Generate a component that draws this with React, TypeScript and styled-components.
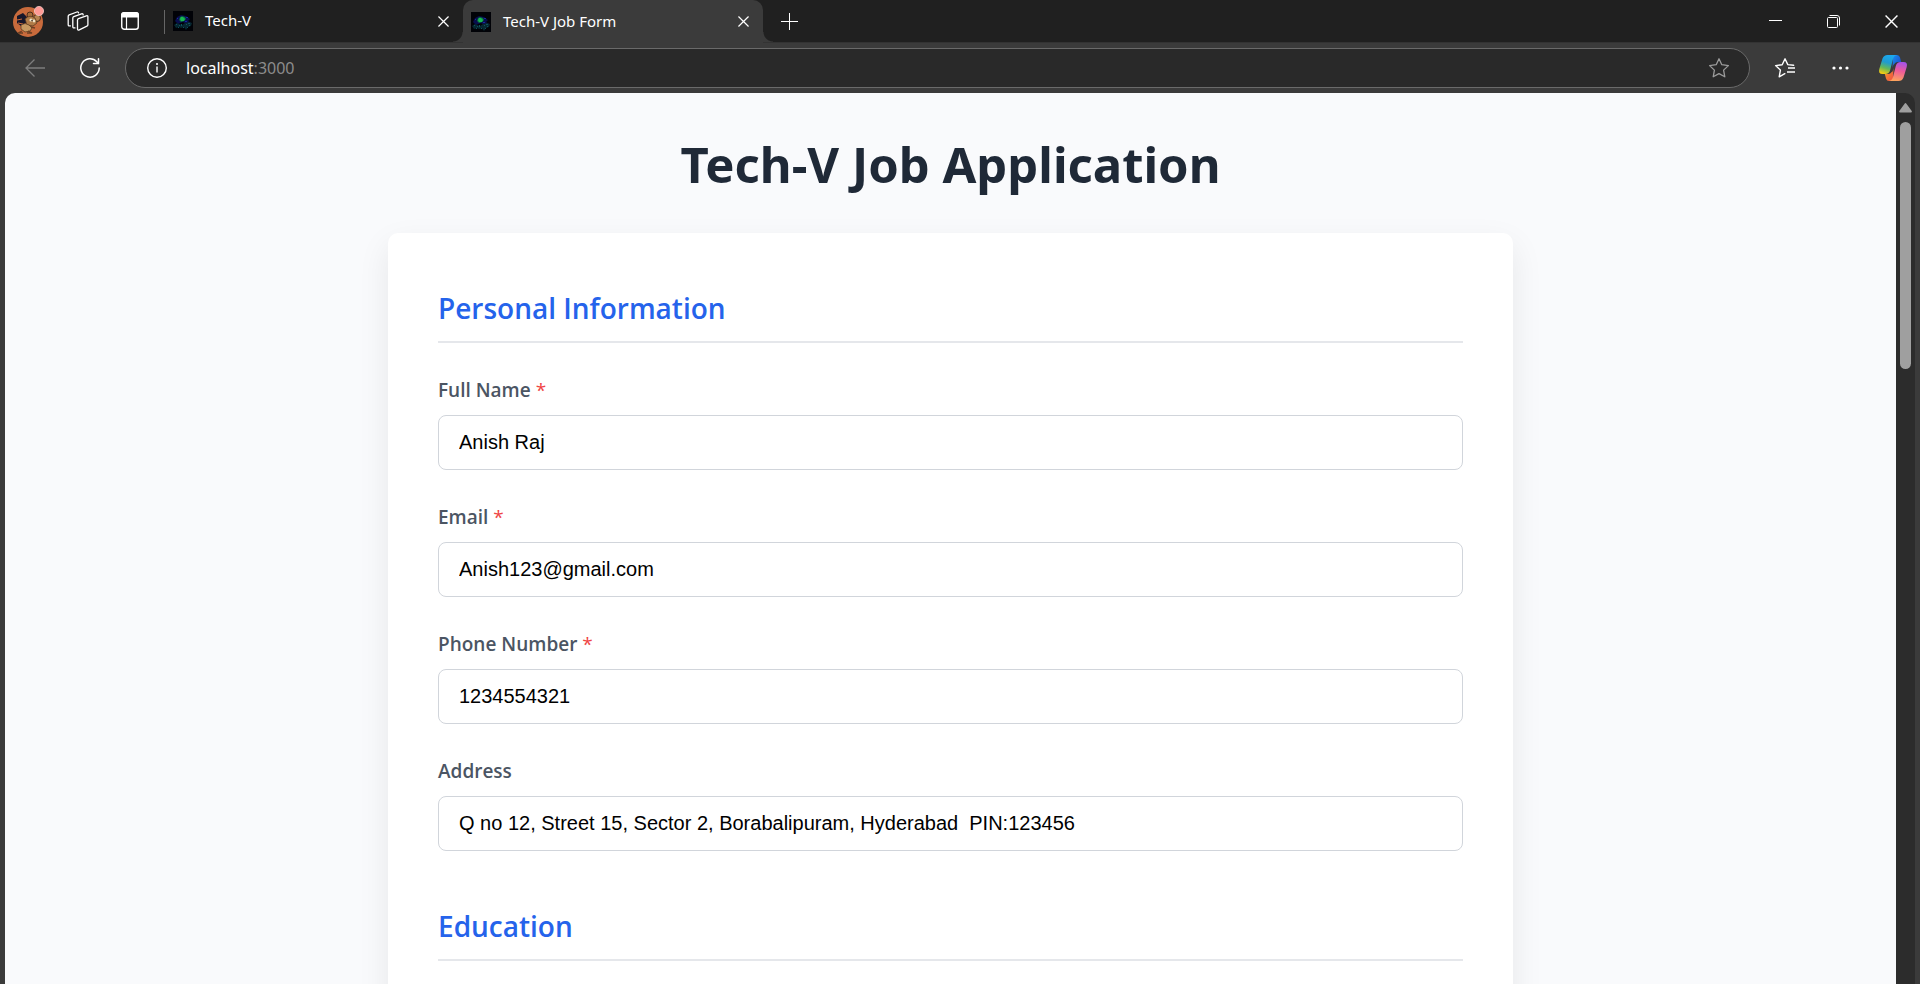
import React, { useId } from 'react';
import styled, { createGlobalStyle, css } from 'styled-components';

const GlobalStyle = createGlobalStyle`
  *, *::before, *::after { box-sizing: border-box; }
  body { margin: 0; background: #3b3b3b; font-family: "Noto Sans", "Open Sans", sans-serif; }
`;

const Browser = styled.div`
  display: flex;
  flex-direction: column;
  height: 100vh;
  overflow: hidden;
  background: #3b3b3b;
  color: #ffffff;
`;

const TabStrip = styled.header`
  display: flex;
  align-items: stretch;
  height: 43px;
  flex: none;
  background: #202020;
  border-bottom: 1px solid #333333;
`;

const IconButton = styled.button<{ $width?: number }>`
  display: flex;
  align-items: center;
  justify-content: center;
  flex: none;
  width: ${({ $width = 40 }) => $width}px;
  padding: 0;
  border: 0;
  background: none;
  color: #ffffff;

  &:disabled { color: #7d7d7d; }
  svg { display: block; overflow: visible; }
`;

const StripTools = styled.div`
  display: flex;
  padding: 0 4px 0 3px;
`;

const TabList = styled.nav`
  display: flex;
`;

const Tab = styled.div<{ $active?: boolean }>`
  position: relative;
  display: flex;
  align-items: center;
  width: 300px;
  padding: 0 4px 0 ${({ $active }) => ($active ? 8 : 10)}px;

  ${({ $active }) => $active ? css`
    height: 43px;
    background: #3b3b3b;
    border-radius: 10px 10px 0 0;

    &::before, &::after {
      content: "";
      position: absolute;
      bottom: 1px;
      width: 10px;
      height: 10px;
    }
    &::before { left: -10px; background: radial-gradient(circle at 0 0, transparent 9px, #3b3b3b 10px); }
    &::after { right: -10px; background: radial-gradient(circle at 100% 0, transparent 9px, #3b3b3b 10px); }
  ` : css`
    &::before {
      content: "";
      position: absolute;
      left: 1px;
      top: 10px;
      width: 1px;
      height: 24px;
      background: #666666;
    }
  `}
`;

const TabLink = styled.a`
  display: flex;
  align-items: center;
  gap: 12px;
  flex: 1;
  color: #ffffff;
  font-size: 15px;
  line-height: 20px;
  text-decoration: none;
  white-space: nowrap;
`;

const TabTitle = styled.span`
  padding-bottom: 2px;
`;

const WindowControls = styled.div`
  display: flex;
  margin-left: auto;
`;

const Toolbar = styled.div`
  display: flex;
  align-items: center;
  height: 50px;
  flex: none;
  padding: 0 2px 0 7px;
`;

const AddressBar = styled.div`
  display: flex;
  align-items: center;
  flex: 1;
  height: 40px;
  margin: 0 8px;
  padding: 0 10px 0 11px;
  border: 1px solid #6a6a6a;
  border-radius: 20px;
  background: #292929;
`;

const Address = styled.a`
  flex: 1;
  margin-left: 9px;
  color: #ffffff;
  font-size: 16px;
  line-height: 24px;
  text-decoration: none;

  span { color: #8c8c8c; }
`;

const Viewport = styled.div`
  display: flex;
  flex: 1;
  min-height: 0;
  margin: 0 5px;
  overflow: hidden;
  border-radius: 10px 10px 0 0;
`;

const Page = styled.main`
  flex: 1;
  min-width: 0;
  padding: 41px 20px;
  overflow: hidden;
  background: #f9fafc;
`;

const PageTitle = styled.h1`
  margin: 0 0 39px;
  color: #1f2937;
  font-size: 49px;
  font-weight: 700;
  line-height: 60px;
  text-align: center;
`;

const Card = styled.form`
  max-width: 1125px;
  margin: 0 auto;
  padding: 0 50px 50px;
  border-radius: 10px;
  background: #ffffff;
  box-shadow: 0 12px 32px rgba(0, 0, 0, 0.08);
`;

const Section = styled.section`
  display: flex;
  flex-direction: column;
  gap: 33px;
  padding-top: 55px;
`;

const SectionTitle = styled.h2`
  margin: 0;
  padding-bottom: 13px;
  border-bottom: 2px solid #e5e7eb;
  color: #2563eb;
  font-family: "Open Sans", sans-serif;
  font-size: 28px;
  font-weight: 600;
  line-height: 40px;
`;

const FieldGroup = styled.div`
  display: flex;
  flex-direction: column;
  gap: 11px;
`;

const Label = styled.label`
  color: #4b5563;
  font-family: "Open Sans", sans-serif;
  font-size: 19px;
  font-weight: 600;
  line-height: 28px;
`;

const Required = styled.span`
  color: #ef4444;
  font-weight: 400;
`;

const TextInput = styled.input`
  width: 100%;
  height: 55px;
  padding: 0 20px;
  border: 1px solid #d1d5db;
  border-radius: 8px;
  background: #ffffff;
  color: #000000;
  font-family: "Liberation Sans", Arial, sans-serif;
  font-size: 20px;
`;

const ScrollTrack = styled.div`
  display: flex;
  flex-direction: column;
  align-items: center;
  gap: 9px;
  width: 19px;
  padding-top: 10px;
  background: #2c2c2c;
`;

const ScrollThumb = styled.div`
  width: 11px;
  height: 28%;
  border-radius: 6px;
  background: #9f9f9f;
`;

const Avatar = () => (
  <svg width="32" height="32" viewBox="0 0 32 32">
    <circle cx="15" cy="17" r="15" fill="#c96b3c" />
    <path d="M4 11l6-3 4 4-1 6-5 3-4-3z" fill="#17172a" />
    <path d="M4 15l5-1M5 18l5 1" stroke="#c96b3c" />
    <circle cx="17" cy="10" r="3" fill="#a56d3c" stroke="#4c2d1a" />
    <circle cx="24" cy="13" r="3.5" fill="#b88450" stroke="#4c2d1a" />
    <path d="M12 14q5-5 10-1l2 5-4 3-6-1z" fill="#b07c48" stroke="#53351e" strokeWidth=".7" />
    <circle cx="18" cy="15" r="1.6" fill="#f1e4c8" />
    <circle cx="21" cy="16" r="1.4" fill="#f1e4c8" />
    <circle cx="19" cy="15.5" r=".7" fill="#1b130e" />
    <path d="M8 20q4-3 8 0l3 3-2 3-5 1-4-3z" fill="#c79a62" stroke="#53351e" strokeWidth=".7" />
    <path d="M9 26l-4 2h5M15 26l4 2h-5M18 22l4 1" stroke="#6b4023" strokeWidth="1.3" fill="none" />
    <circle cx="26" cy="6" r="4.6" fill="#ff9a95" stroke="#f3c9c4" strokeWidth=".8" />
  </svg>
);

const WorkspacesIcon = () => (
  <svg width="22" height="20" viewBox="0 0 22 20" fill="none" stroke="currentColor" strokeWidth="1.3" strokeLinejoin="round" strokeLinecap="round">
    <path d="M10.500 9q0-1 1-1.400l7.800-2.800q1.600-.5 1.600 1v8q0 1-1 1.400l-7.600 3.600q-1.800.8-1.800-1z" />
    <path d="M8 16.800q-2.200.6-2.200-1V7q0-1 1-1.400L14.500 2.800q1.400-.4 1.700 1" />
    <path d="M3.400 14.800Q1.200 15.400 1.200 13.800V5.200q0-1 1-1.400L9.900 1q1.400-.4 1.700.8" />
  </svg>
);

const TabActionsIcon = () => (
  <svg width="18" height="18" viewBox="0 0 18 18">
    <rect x=".75" y=".75" width="16.500" height="16.500" rx="2.500" fill="none" stroke="currentColor" strokeWidth="1.400" />
    <path d="M0 5.500V3a3 3 0 0 1 3-3h12a3 3 0 0 1 3 3v2.500z" fill="currentColor" />
    <path d="M5.500 5v12" stroke="currentColor" strokeWidth="1.200" />
  </svg>
);

const Favicon = () => (
  <svg width="20" height="20" viewBox="0 0 20 20">
    <rect width="20" height="20" fill="#010207" />
    <path d="M2 10l2-4 4-2 5 1 4 3-2 2 3 2-5 1-3-2-5 2z" fill="#080e4c" />
    <path d="M1 14l3-2 2 1 3 1 3-2 4-1 3 1-1 3-3 1-2 3-2-3-3 1-2-1-3 1z" fill="#062731" />
    <path d="M3 13h1v1H3zM6 14h1v1H6zM8 13h1v2H8zM13 13h1v1h-1zM15 12h2v1h-2zM14 16h1v1h-1zM10 16h1v1h-1zM5 16h1v1H5zM16 14h1v1h-1z" fill="#0e535c" />
    <path d="M6 9l1-3 2-1 3 1 1 2-2 2-3 1z" fill="#0a6c45" />
    <path d="M7 8l1-2h2l2 2-1 2H8z" fill="#18b950" />
    <path d="M4 7h1v1H4zM13 6h2v1h-2zM12 10h2v1h-2z" fill="#1729a1" />
  </svg>
);

const CrossIcon = ({ size = 11 }: { size?: number }) => (
  <svg width={size} height={size} viewBox="0 0 12 12" stroke="currentColor" strokeWidth="1.300">
    <path d="M.5.500l11 11M11.500.500l-11 11" />
  </svg>
);

const PlusIcon = () => (
  <svg width="17" height="17" viewBox="0 0 17 17" stroke="currentColor">
    <path d="M8.500 0v17M0 8.500h17" />
  </svg>
);

const MinimizeIcon = () => (
  <svg width="13" height="13" viewBox="0 0 13 13" stroke="currentColor"><path d="M0 5.500h13" /></svg>
);

const RestoreIcon = () => (
  <svg width="13" height="13" viewBox="0 0 13 13" fill="none" stroke="currentColor">
    <rect x=".5" y="2.500" width="10" height="10" rx="1" />
    <path d="M2.500 .500h7.500a2.500 2.500 0 0 1 2.500 2.500v7.500" />
  </svg>
);

const BackIcon = () => (
  <svg width="20" height="18" viewBox="0 0 20 18" fill="none" stroke="currentColor" strokeWidth="1.300">
    <path d="M20 9H1M9.500 .500L1 9l8.500 8.500" />
  </svg>
);

const ReloadIcon = () => (
  <svg width="20" height="20" viewBox="0 0 20 20" fill="none" stroke="currentColor" strokeWidth="1.500" strokeLinecap="round">
    <path d="M19.200 10A9.200 9.200 0 1 1 16.800 3.800L18.500 5.500M18.500 .800v4.700H13.500" />
  </svg>
);

const InfoIcon = () => (
  <svg width="20" height="20" viewBox="0 0 20 20" fill="none" stroke="currentColor" strokeWidth="1.400">
    <circle cx="10" cy="10" r="9.300" />
    <path d="M10 8.500v6" />
    <circle cx="10" cy="6" r="1" fill="currentColor" stroke="none" />
  </svg>
);

const StarIcon = () => (
  <svg width="20" height="20" viewBox="0 0 20 20" fill="none" stroke="#9b9b9b" strokeWidth="1.300" strokeLinejoin="round">
    <path d="M10 .800l2.800 5.900 6.600.9-4.800 4.500 1.200 6.700L10 15.600l-5.800 3.200 1.200-6.700L.600 7.600l6.600-.9z" />
  </svg>
);

const FavoritesIcon = () => (
  <svg width="20" height="20" viewBox="0 0 20 20" fill="none" stroke="currentColor" strokeWidth="1.400" strokeLinejoin="round" strokeLinecap="round">
    <path d="M18.600 7.300l-5.800-.7L10 .800 7.200 6.700.600 7.600l4.800 4.500-1.200 6.700L9.800 15.700" />
    <path d="M13 10.500h7M12 14.500h8" strokeLinecap="butt" transform="translate(0 -.5)" />
  </svg>
);

const MoreIcon = () => (
  <svg width="17" height="4" viewBox="0 0 17 4" fill="currentColor">
    <circle cx="2" cy="2" r="1.600" /><circle cx="8.500" cy="2" r="1.600" /><circle cx="15" cy="2" r="1.600" />
  </svg>
);

const CopilotIcon = () => (
  <svg width="28" height="26" viewBox="0 0 28 26">
    <defs>
      <linearGradient id="cpLeft" x1=".6" y1="0" x2=".3" y2="1">
        <stop offset="0" stopColor="#1ba8ee" /><stop offset=".4" stopColor="#1f9bd1" />
        <stop offset=".7" stopColor="#63b85a" /><stop offset="1" stopColor="#f5cb12" />
      </linearGradient>
      <linearGradient id="cpRight" x1=".6" y1="0" x2=".4" y2="1">
        <stop offset="0" stopColor="#a653e8" /><stop offset=".45" stopColor="#ee5a9a" /><stop offset="1" stopColor="#fda45c" />
      </linearGradient>
      <linearGradient id="cpTop" x1="0" y1="0" x2="1" y2="1">
        <stop offset="0" stopColor="#1b8ef0" /><stop offset="1" stopColor="#1b3fc0" />
      </linearGradient>
      <linearGradient id="cpBottom" x1="0" y1="0" x2="1" y2="1">
        <stop offset="0" stopColor="#f7a325" /><stop offset="1" stopColor="#ee4a45" />
      </linearGradient>
    </defs>
    <path d="M14 0h4q2.300 0 3 2.500L22.200 7H19q-3.500 0-4.500 4l-1 3z" fill="url(#cpTop)" />
    <path d="M14 26h-4q-2.300 0-3-2.500L5.800 19H9q3.500 0 4.500-4l1-3z" fill="url(#cpBottom)" />
    <path d="M8.500 0H18q-3 .5-4 4l-2.800 11q-1 4-5 4H3.500Q-1 19 .3 14L3.500 3.500Q4.800 0 8.500 0z" fill="url(#cpLeft)" />
    <path d="M19.500 26H10q3-.5 4-4l2.800-11q1-4 5-4h2.700Q29 7 27.700 12l-3.200 10.500Q23.200 26 19.500 26z" fill="url(#cpRight)" />
    <path d="M14.800 9.500h1.800L13.200 17h-2.400z" fill="#3b3b3b" />
  </svg>
);

const ScrollArrow = () => (
  <svg width="13" height="10" viewBox="0 0 13 10">
    <path d="M6.500 1L1 8.500h11z" fill="#9f9f9f" stroke="#9f9f9f" strokeWidth="1.800" strokeLinejoin="round" />
  </svg>
);

interface FieldProps {
  label: string;
  type?: string;
  value: string;
  required?: boolean;
}

function Field({ label, type = 'text', value, required }: FieldProps) {
  const id = useId();
  return (
    <FieldGroup>
      <Label htmlFor={id}>{label}{required && <Required> *</Required>}</Label>
      <TextInput id={id} type={type} defaultValue={value} required={required} />
    </FieldGroup>
  );
}

function BrowserTab({ title, active }: { title: string; active?: boolean }) {
  return (
    <Tab $active={active}>
      <TabLink href="#" aria-current={active ? 'page' : undefined}><Favicon /><TabTitle>{title}</TabTitle></TabLink>
      <IconButton $width={32} aria-label={`Close ${title}`}><CrossIcon /></IconButton>
    </Tab>
  );
}

export default function App() {
  return (
    <Browser>
      <GlobalStyle />
      <TabStrip>
        <StripTools>
          <IconButton $width={52} aria-label="Profile"><Avatar /></IconButton>
          <IconButton $width={46} aria-label="Workspaces"><WorkspacesIcon /></IconButton>
          <IconButton $width={58} aria-label="Tab actions"><TabActionsIcon /></IconButton>
        </StripTools>
        <TabList aria-label="Tabs">
          <BrowserTab title="Tech-V" />
          <BrowserTab title="Tech-V Job Form" active />
        </TabList>
        <IconButton $width={52} aria-label="New tab"><PlusIcon /></IconButton>
        <WindowControls>
          <IconButton $width={58} aria-label="Minimize"><MinimizeIcon /></IconButton>
          <IconButton $width={58} aria-label="Restore"><RestoreIcon /></IconButton>
          <IconButton $width={58} aria-label="Close window"><CrossIcon size={13} /></IconButton>
        </WindowControls>
      </TabStrip>
      <Toolbar>
        <IconButton $width={56} aria-label="Back" disabled><BackIcon /></IconButton>
        <IconButton $width={54} aria-label="Reload"><ReloadIcon /></IconButton>
        <AddressBar>
          <IconButton aria-label="Site information"><InfoIcon /></IconButton>
          <Address href="#">localhost<span>:3000</span></Address>
          <IconButton aria-label="Add to favorites"><StarIcon /></IconButton>
        </AddressBar>
        <IconButton $width={54} aria-label="Favorites"><FavoritesIcon /></IconButton>
        <IconButton $width={56} aria-label="Settings and more"><MoreIcon /></IconButton>
        <IconButton $width={50} aria-label="Copilot"><CopilotIcon /></IconButton>
      </Toolbar>
      <Viewport>
        <Page>
          <PageTitle>Tech-V Job Application</PageTitle>
          <Card>
            <Section>
              <SectionTitle>Personal Information</SectionTitle>
              <Field label="Full Name" value="Anish Raj" required />
              <Field label="Email" type="email" value="Anish123@gmail.com" required />
              <Field label="Phone Number" type="tel" value="1234554321" required />
              <Field label="Address" value="Q no 12, Street 15, Sector 2, Borabalipuram, Hyderabad  PIN:123456" />
            </Section>
            <Section>
              <SectionTitle>Education</SectionTitle>
            </Section>
          </Card>
        </Page>
        <ScrollTrack aria-hidden="true">
          <ScrollArrow />
          <ScrollThumb />
        </ScrollTrack>
      </Viewport>
    </Browser>
  );
}
